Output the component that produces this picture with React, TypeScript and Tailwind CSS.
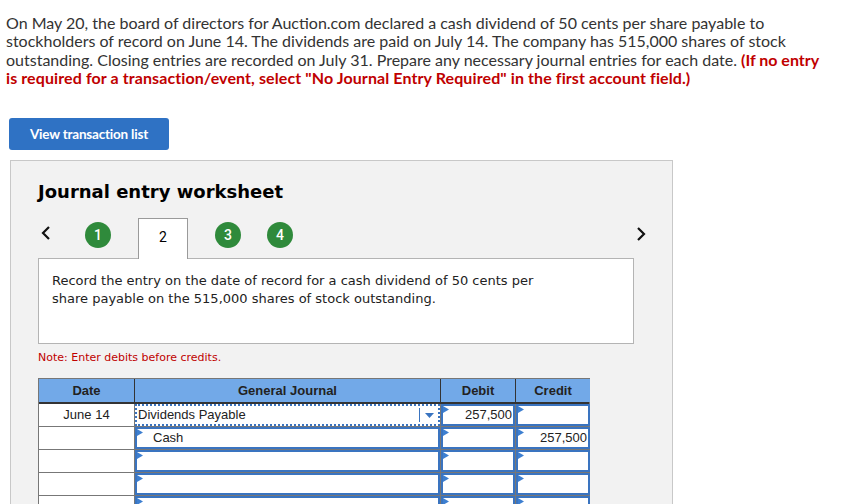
import React from 'react'

const Flag = () => (
  <svg className="absolute left-0 top-0" width="6" height="7" viewBox="0 0 6 7">
    <polygon points="0,0 6,3.5 0,7" fill="#3d7fd0" />
  </svg>
)

function Circle({ n }: { n: number }) {
  return (
    <div className="w-[26px] h-[26px] rounded-full bg-[#2f8a3b] text-white flex items-center justify-center text-[14px] font-medium font-['Roboto',sans-serif]">
      {n}
    </div>
  )
}

function InputCell({ children, align = 'left', indent = false }: { children?: React.ReactNode; align?: 'left' | 'right'; indent?: boolean }) {
  return (
    <div className="relative h-full border-2 border-[#3a74c0] bg-white">
      <Flag />
      <div
        className={
          'h-full flex items-center text-[13px] text-[#222] ' +
          (align === 'right' ? 'justify-end pr-[1px]' : indent ? 'pl-[16px]' : 'pl-[2px]')
        }
      >
        {children}
      </div>
    </div>
  )
}

export default function App() {
  const rows = [
    { date: 'June 14', account: 'Dividends Payable', debit: '257,500', credit: '' },
    { date: '', account: 'Cash', debit: '', credit: '257,500' },
    { date: '', account: '', debit: '', credit: '' },
    { date: '', account: '', debit: '', credit: '' },
    { date: '', account: '', debit: '', credit: '' },
  ]

  return (
    <div className="w-[851px] h-[504px] overflow-hidden bg-white">
      {/* Question text */}
      <p className="pt-[14px] pl-[6px] text-[16px] leading-[18.3px] text-[#333] font-['Lato',sans-serif]">
        On May 20, the board of directors for Auction.com declared a cash dividend of 50 cents per share payable to
        <br />
        stockholders of record on June 14. The dividends are paid on July 14. The company has 515,000 shares of stock
        <br />
        outstanding. Closing entries are recorded on July 31. Prepare any necessary journal entries for each date.{' '}
        <span className="font-bold text-[#c00000]">(If no entry</span>
        <br />
        <span className="font-bold text-[#c00000] tracking-[0.1px]">
          is required for a transaction/event, select "No Journal Entry Required" in the first account field.)
        </span>
      </p>

      <button className="block ml-[9px] mt-[31px] w-[160px] h-[32px] rounded-[3px] bg-[#2f72c4] text-white text-[13.5px] font-bold tracking-[-0.2px] font-['Lato',sans-serif]">
        View transaction list
      </button>

      {/* Worksheet panel */}
      <div className="ml-[10px] mt-[10px] w-[663px] h-[400px] border border-[#c8c8c8] bg-[#f2f2f2] pl-[27px] pt-[20px] font-['DejaVu_Sans',sans-serif]">
        <h2 className="text-[18px] leading-[22px] font-bold text-black">Journal entry worksheet</h2>

        {/* Tabs */}
        <div className="mt-[15px] flex items-start h-[40px] w-[610px] relative">
          <svg className="mt-[8px] ml-[3px]" width="10" height="14" viewBox="0 0 10 14">
            <polyline points="8,1 2,7 8,13" fill="none" stroke="#111" strokeWidth="2.2" />
          </svg>
          <div className="ml-[34px] mt-[4px]">
            <Circle n={1} />
          </div>
          <div className="ml-[27px] w-[50px] h-[41px] bg-white border border-b-0 border-[#9a9a9a] relative z-10 flex items-center justify-center text-[14px] text-black font-['Roboto',sans-serif] pb-[4px]">
            2
          </div>
          <div className="ml-[27px] mt-[4px]">
            <Circle n={3} />
          </div>
          <div className="ml-[26px] mt-[4px]">
            <Circle n={4} />
          </div>
          <svg className="ml-auto mt-[9px] mr-[2px]" width="10" height="14" viewBox="0 0 10 14">
            <polyline points="2,1 8,7 2,13" fill="none" stroke="#111" strokeWidth="2.2" />
          </svg>
        </div>

        <div className="w-[596px] h-[86px] bg-white border border-[#b4b4b4] pl-[13px] pt-[13px] text-[13px] leading-[18px] text-[#222]">
          Record the entry on the date of record for a cash dividend of 50 cents per
          <br />
          share payable on the 515,000 shares of stock outstanding.
        </div>

        <p className="mt-[7px] text-[11px] leading-[14px] text-[#c00000]">Note: Enter debits before credits.</p>

        {/* Journal table */}
        <div className="mt-[13px] w-[552px] border border-[#777] bg-[#777] font-['Liberation_Sans',Arial,sans-serif]">
          <div className="grid grid-cols-[95px_305px_74px_74px] gap-x-px bg-[#333] h-[25px] border-b-2 border-[#333] text-[13px] font-bold text-[#222]">
            <div className="flex items-center justify-center bg-[#72a9e8]">Date</div>
            <div className="flex items-center justify-center bg-[#72a9e8]">General Journal</div>
            <div className="flex items-center justify-center bg-[#72a9e8]">Debit</div>
            <div className="flex items-center justify-center bg-[#72a9e8]">Credit</div>
          </div>
          <div className="grid grid-cols-[95px_305px_74px_74px] auto-rows-[22px] gap-px">
            {rows.map((r, i) => (
              <React.Fragment key={i}>
                <div className="flex items-center justify-center bg-white text-[13px] text-[#222]">{r.date}</div>
                {i === 0 ? (
                  <div className="relative h-full border-2 border-dotted border-[#3a74c0] bg-white flex items-center">
                    <span className="pl-[1px] text-[13px] text-[#222]">{r.account}</span>
                    <div className="absolute right-[18px] top-[2px] bottom-[2px] w-px bg-[#3a74c0]" />
                    <svg className="absolute right-[4px] top-[7px]" width="9" height="5" viewBox="0 0 9 5">
                      <polygon points="0,0 9,0 4.5,5" fill="#3a74c0" />
                    </svg>
                  </div>
                ) : (
                  <InputCell indent={i === 1}>{r.account}</InputCell>
                )}
                <InputCell align="right">{r.debit}</InputCell>
                <InputCell align="right">{r.credit}</InputCell>
              </React.Fragment>
            ))}
          </div>
        </div>
      </div>
    </div>
  )
}
